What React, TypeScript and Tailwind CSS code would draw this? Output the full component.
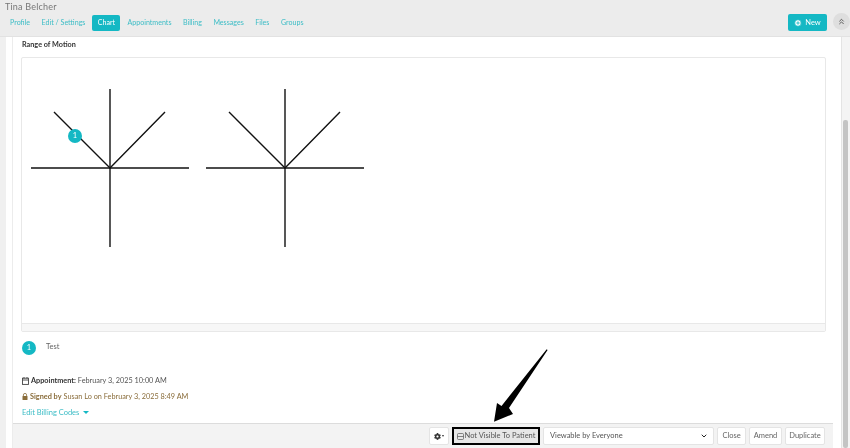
import { ChevronDown, ChevronsUp, CirclePlus } from "lucide-react";
import { FaCog } from "react-icons/fa";

const tabs = ["Profile", "Edit / Settings", "Chart", "Appointments", "Billing", "Messages", "Files", "Groups"];

function Cross() {
  return (
    <svg width="175" height="175" viewBox="0 0 175 175" className="shrink-0" fill="none" stroke="#111" strokeWidth="1.4">
      <path d="M9 79 H167" />
      <path d="M88 0 V158" />
      <path d="M32 23 L88 79 L143 23" />
    </svg>
  );
}

export default function App() {
  const footerBtn = "h-[18px] bg-white border border-[#e4e4e4] rounded-[2px] text-[7.5px] text-[#666] flex items-center justify-center";
  return (
    <div className="relative w-[850px] h-[448px] overflow-hidden flex flex-col bg-white font-['Lato','Liberation_Sans',sans-serif] blur-[0.3px]">
      <header className="h-[37px] shrink-0 bg-[#ececec] border-b border-[#e2e2e2] flex justify-between">
        <div className="pl-[5px] pt-[1px]">
          <div className="text-[9px] leading-[11px] text-[#777] tracking-[0.2px]">Tina Belcher</div>
          <nav className="flex items-center gap-[1.5px] mt-[3px] text-[7.1px]">
            {tabs.map((t) => (
              <span
                key={t}
                className={
                  t === "Chart"
                    ? "h-[16px] w-[28px] mx-[0.5px] flex items-center justify-center rounded-[2px] bg-[#14b8c4] text-white"
                    : "h-[16px] px-[5px] flex items-center text-[#3dbdc6]"
                }
              >
                {t}
              </span>
            ))}
          </nav>
        </div>
        <div className="flex items-start gap-[6px] pt-[14px]">
          <button className="w-[39px] h-[17px] rounded-[2px] bg-[#14b8c4] text-white text-[7.5px] flex items-center justify-center gap-[3px]">
            <CirclePlus size={8} fill="white" stroke="#14b8c4" strokeWidth={2.5} />
            New
          </button>
          <div className="w-[17px] h-[17px] rounded-full bg-[#dedede] flex items-center justify-center -mt-[1px]">
            <ChevronsUp size={9} color="#333" />
          </div>
        </div>
      </header>

      <div className="flex-1 flex min-h-0">
        <div className="w-[6px] bg-[#f0f0f0]" />
        <div className="w-[7px] bg-white border-r border-[#ececec]" />
        <main className="w-[820px] flex flex-col min-h-0">
          <div className="flex-1 px-[9px] pt-[3px] bg-white min-h-0">
            <h2 className="text-[7.25px] leading-[9px] font-bold text-[#333]">Range of Motion</h2>
            <div className="mt-[8px] -ml-[1px] w-[805px] h-[275px] border border-[#e8e8e8] rounded-[2px] bg-white flex flex-col overflow-hidden">
              <div className="relative flex-1 pt-[31px] flex">
                <Cross />
                <Cross />
                <span className="absolute left-[46px] top-[71px] w-[14px] h-[14px] rounded-full bg-[#14b8c4] text-white text-[7.5px] flex items-center justify-center">1</span>
              </div>
              <div className="h-[8px] bg-[#f7f7f7] border-t border-[#e8e8e8]" />
            </div>
            <div className="mt-[9px] flex items-start">
              <span className="w-[14px] h-[14px] rounded-full bg-[#14b8c4] text-white text-[7.5px] flex items-center justify-center">1</span>
              <span className="ml-[10px] mt-[1px] text-[7.5px] leading-[9px] text-[#666]">Test</span>
            </div>
            <div className="mt-[21px] flex items-center gap-[2px] text-[7.3px] leading-[9px] text-[#555]">
              <svg width="7" height="8" viewBox="0 0 7 8" fill="none" stroke="#444" strokeWidth="0.9">
                <rect x="0.5" y="1.2" width="6" height="6.2" />
                <path d="M0.5 3 H6.5" />
                <path d="M2 0 V1.5 M5 0 V1.5" />
              </svg>
              <b className="text-[#333]">Appointment:</b> February 3, 2025 10:00 AM
            </div>
            <div className="mt-[7px] flex items-center gap-[2px] text-[7.3px] leading-[9px] text-[#8a6d3b]">
              <svg width="6" height="7" viewBox="0 0 6 7" fill="#8a6d3b">
                <rect x="0.5" y="3" width="5" height="4" rx="0.5" />
                <path d="M1.4 3 V2 a1.6 1.6 0 0 1 3.2 0 V3" fill="none" stroke="#8a6d3b" strokeWidth="0.8" />
              </svg>
              <b>Signed by</b> Susan Lo on February 3, 2025 8:49 AM
            </div>
            <div className="mt-[7px] flex items-center gap-[4px] text-[7.5px] leading-[9px] text-[#3dbdc6]">
              Edit Billing Codes
              <span className="w-0 h-0 border-x-[3px] border-x-transparent border-t-[3px] border-t-[#14b8c4]" />
            </div>
          </div>
          <footer className="h-[25px] shrink-0 bg-[#f3f3f3] border-t border-[#dcdcdc] flex items-start justify-end gap-[3px] pt-[3px] pr-[8px]">
            <button className={footerBtn + " w-[20px] gap-[1px]"}>
              <FaCog size={7} color="#333" />
              <span className="w-0 h-0 border-x-[1.5px] border-x-transparent border-t-[2px] border-t-[#333]" />
            </button>
            <button className="h-[18px] w-[88px] bg-[#e6e6e6] border-2 border-black text-[7.5px] text-[#555] flex items-center justify-center gap-[1px]">
              <svg width="7" height="7" viewBox="0 0 7 7" fill="none" stroke="#555" strokeWidth="0.7">
                <rect x="0.5" y="0.5" width="6" height="6" rx="1" />
                <path d="M0.5 3.5 H6.5" />
              </svg>
              Not Visible To Patient
            </button>
            <div className="h-[18px] w-[171px] bg-white border border-[#e4e4e4] rounded-[2px] text-[7.5px] text-[#555] flex items-center justify-between pl-[6px] pr-[5px]">
              Viewable by Everyone
              <ChevronDown size={8} color="#222" strokeWidth={3} />
            </div>
            <button className={footerBtn + " w-[29px]"}>Close</button>
            <button className={footerBtn + " w-[33px]"}>Amend</button>
            <button className={footerBtn + " w-[40px]"}>Duplicate</button>
          </footer>
        </main>
        <div className="w-[8px] bg-white" />
        <div className="w-[9px] bg-[#f4f4f4] border-l border-[#e4e4e4] pl-[1px] pr-[2px] pt-[83px]">
          <div className="h-full bg-[#c4c4c4] rounded-[2px]" />
        </div>
      </div>

      <svg className="absolute left-[490px] top-[345px]" width="62" height="80" viewBox="490 345 62 80">
        <polygon points="546.7,349.3 547.6,350 509,408 513,414 494,421.7 497,403 501.5,406" fill="#000" />
      </svg>
    </div>
  );
}
